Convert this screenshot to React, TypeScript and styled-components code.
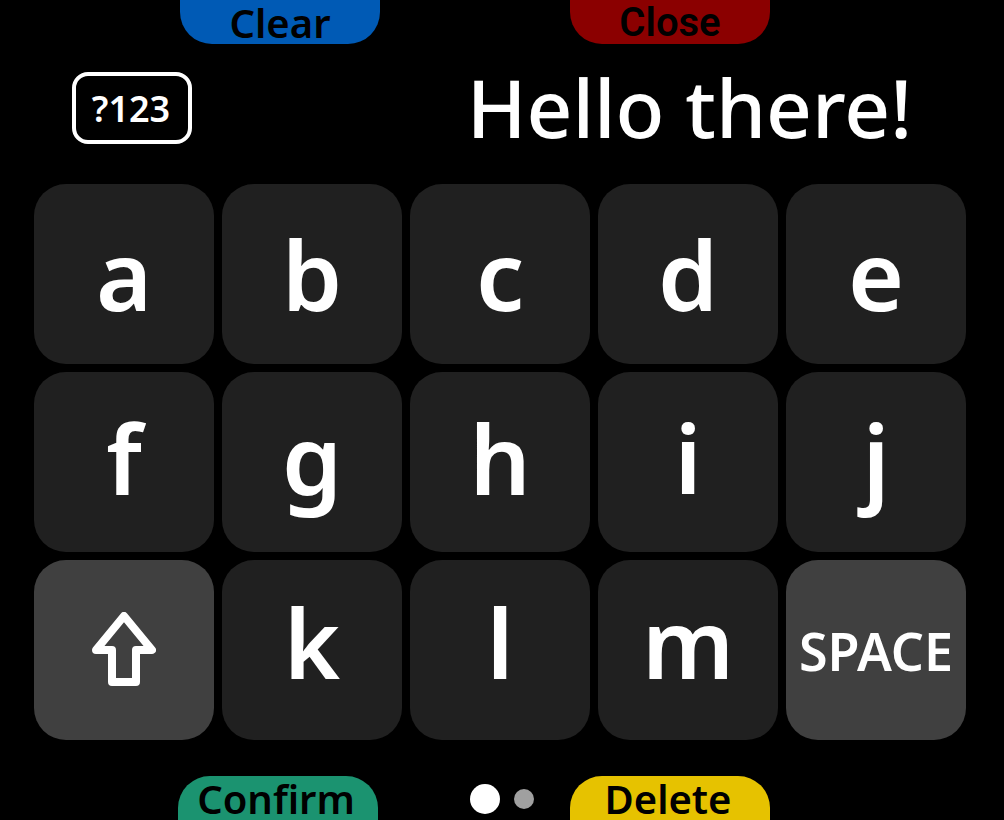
import React, { useState } from "react";
import styled, { createGlobalStyle } from "styled-components";

const GlobalStyle = createGlobalStyle`
  *, *::before, *::after { box-sizing: border-box; }
  body {
    margin: 0;
    background: #000;
    color: #fff;
    font-family: "Noto Sans", sans-serif;
  }
  button { font: inherit; color: inherit; border: 0; padding: 0; cursor: pointer; }
`;

const Screen = styled.main`
  min-height: 100vh;
  display: flex;
  flex-direction: column;
  background: #000;
`;

const EdgeBar = styled.div`
  display: grid;
  grid-template-columns: 1fr 190px 1fr;
  height: 44px;
  padding-right: 54px;
`;

const EdgeSlot = styled.div<{ $side: "left" | "right" }>`
  display: flex;
  justify-content: ${(p) => (p.$side === "left" ? "flex-end" : "flex-start")};
  grid-column: ${(p) => (p.$side === "left" ? 1 : 3)};
`;

const EdgeButton = styled.button<{ $color: string; $edge: "top" | "bottom"; $font?: string }>`
  && {
    padding: ${(p) => (p.$edge === "top" ? "2px 0 0" : "2px 4px 0 0")};
  }
  width: 200px;
  height: 44px;
  background: ${(p) => p.$color};
  color: #000;
  border-radius: ${(p) => (p.$edge === "top" ? "0 0 32px 32px" : "32px 32px 0 0")};
  font-family: ${(p) => p.$font ?? "inherit"};
  font-size: 40px;
  font-weight: 600;
  line-height: 42px;
  white-space: nowrap;
`;

const Header = styled.header`
  display: flex;
  align-items: center;
  justify-content: space-between;
  height: 140px;
  padding: 0 92px 12px 72px;
`;

const ModeButton = styled.button`
  && {
    padding: 2px 2px 0 0;
  }
  width: 120px;
  height: 72px;
  border: 4px solid #fff;
  border-radius: 16px;
  background: transparent;
  font-size: 36px;
  font-weight: 600;
  line-height: 62px;
`;

const Message = styled.output`
  padding-bottom: 2px;
  font-size: 80px;
  font-weight: 500;
  line-height: 100px;
`;

const Keys = styled.section`
  display: grid;
  grid-template-columns: repeat(5, 1fr);
  grid-auto-rows: 180px;
  gap: 8px;
  padding: 0 38px 0 34px;
`;

const KeyBase = styled.button`
  display: flex;
  align-items: center;
  justify-content: center;
  border-radius: 32px;
  font-weight: 600;
  line-height: 1;
`;

const LetterKey = styled(KeyBase)<{ $row: number }>`
  && {
    padding-bottom: ${(p) => p.$row * 8}px;
  }
  background: #202020;
  font-size: 96px;
`;

const ActionKey = styled(KeyBase)`
  && {
    padding-top: 2px;
  }
  background: #404040;
  font-size: 52px;
`;

const ShiftKey = styled(KeyBase)`
  background: #404040;
`;

const Pages = styled.nav`
  display: flex;
  align-items: center;
  justify-content: flex-end;
  gap: 14px;
  grid-column: 2;
  padding: 2px 36px 0 0;
`;

const PageDot = styled.button<{ $active: boolean }>`
  width: ${(p) => (p.$active ? 30 : 20)}px;
  height: ${(p) => (p.$active ? 30 : 20)}px;
  border-radius: 50%;
  background: ${(p) => (p.$active ? "#fff" : "#a0a0a0")};
`;

const Footer = styled.footer`
  margin-top: auto;
  display: grid;
  grid-template-columns: 1fr 192px 1fr;
  height: 44px;
  padding-right: 56px;
`;

const ShiftIcon = () => (
  <svg width="64" height="76" viewBox="0 0 64 76" fill="none" stroke="#fff" strokeWidth="8" strokeLinejoin="round" aria-hidden="true">
    <path d="M32 4 L60 38 H44 V70 H20 V38 H4 Z" />
  </svg>
);

const rows = ["abcde", "fghij", "klm"].map((r) => r.split(""));

export default function App() {
  const [text, setText] = useState("Hello there!");
  const [upper, setUpper] = useState(false);
  const type = (s: string) => setText((t) => t + s);
  const letterKeys = (row: number) =>
    rows[row].map((l) => {
      const glyph = upper ? l.toUpperCase() : l;
      return (
        <LetterKey key={l} type="button" $row={row} onClick={() => type(glyph)}>
          {glyph}
        </LetterKey>
      );
    });

  return (
    <Screen>
      <GlobalStyle />
      <EdgeBar>
        <EdgeSlot $side="left">
          <EdgeButton type="button" $color="#005ab5" $edge="top" onClick={() => setText("")}>Clear</EdgeButton>
        </EdgeSlot>
        <EdgeSlot $side="right">
          <EdgeButton type="button" $color="#8b0000" $edge="top" $font="Roboto, sans-serif">Close</EdgeButton>
        </EdgeSlot>
      </EdgeBar>
      <Header>
        <ModeButton type="button">?123</ModeButton>
        <Message>{text}</Message>
      </Header>
      <Keys aria-label="Keyboard">
        {letterKeys(0)}
        {letterKeys(1)}
        <ShiftKey type="button" aria-label="Shift" aria-pressed={upper} onClick={() => setUpper((u) => !u)}>
          <ShiftIcon />
        </ShiftKey>
        {letterKeys(2)}
        <ActionKey type="button" onClick={() => type(" ")}>SPACE</ActionKey>
      </Keys>
      <Footer>
        <EdgeSlot $side="left">
          <EdgeButton type="button" $color="#1b9370" $edge="bottom">Confirm</EdgeButton>
        </EdgeSlot>
        <Pages aria-label="Key pages">
          <PageDot type="button" $active aria-label="Page 1" />
          <PageDot type="button" $active={false} aria-label="Page 2" />
        </Pages>
        <EdgeSlot $side="right">
          <EdgeButton type="button" $color="#e6c200" $edge="bottom" onClick={() => setText((t) => t.slice(0, -1))}>Delete</EdgeButton>
        </EdgeSlot>
      </Footer>
    </Screen>
  );
}
